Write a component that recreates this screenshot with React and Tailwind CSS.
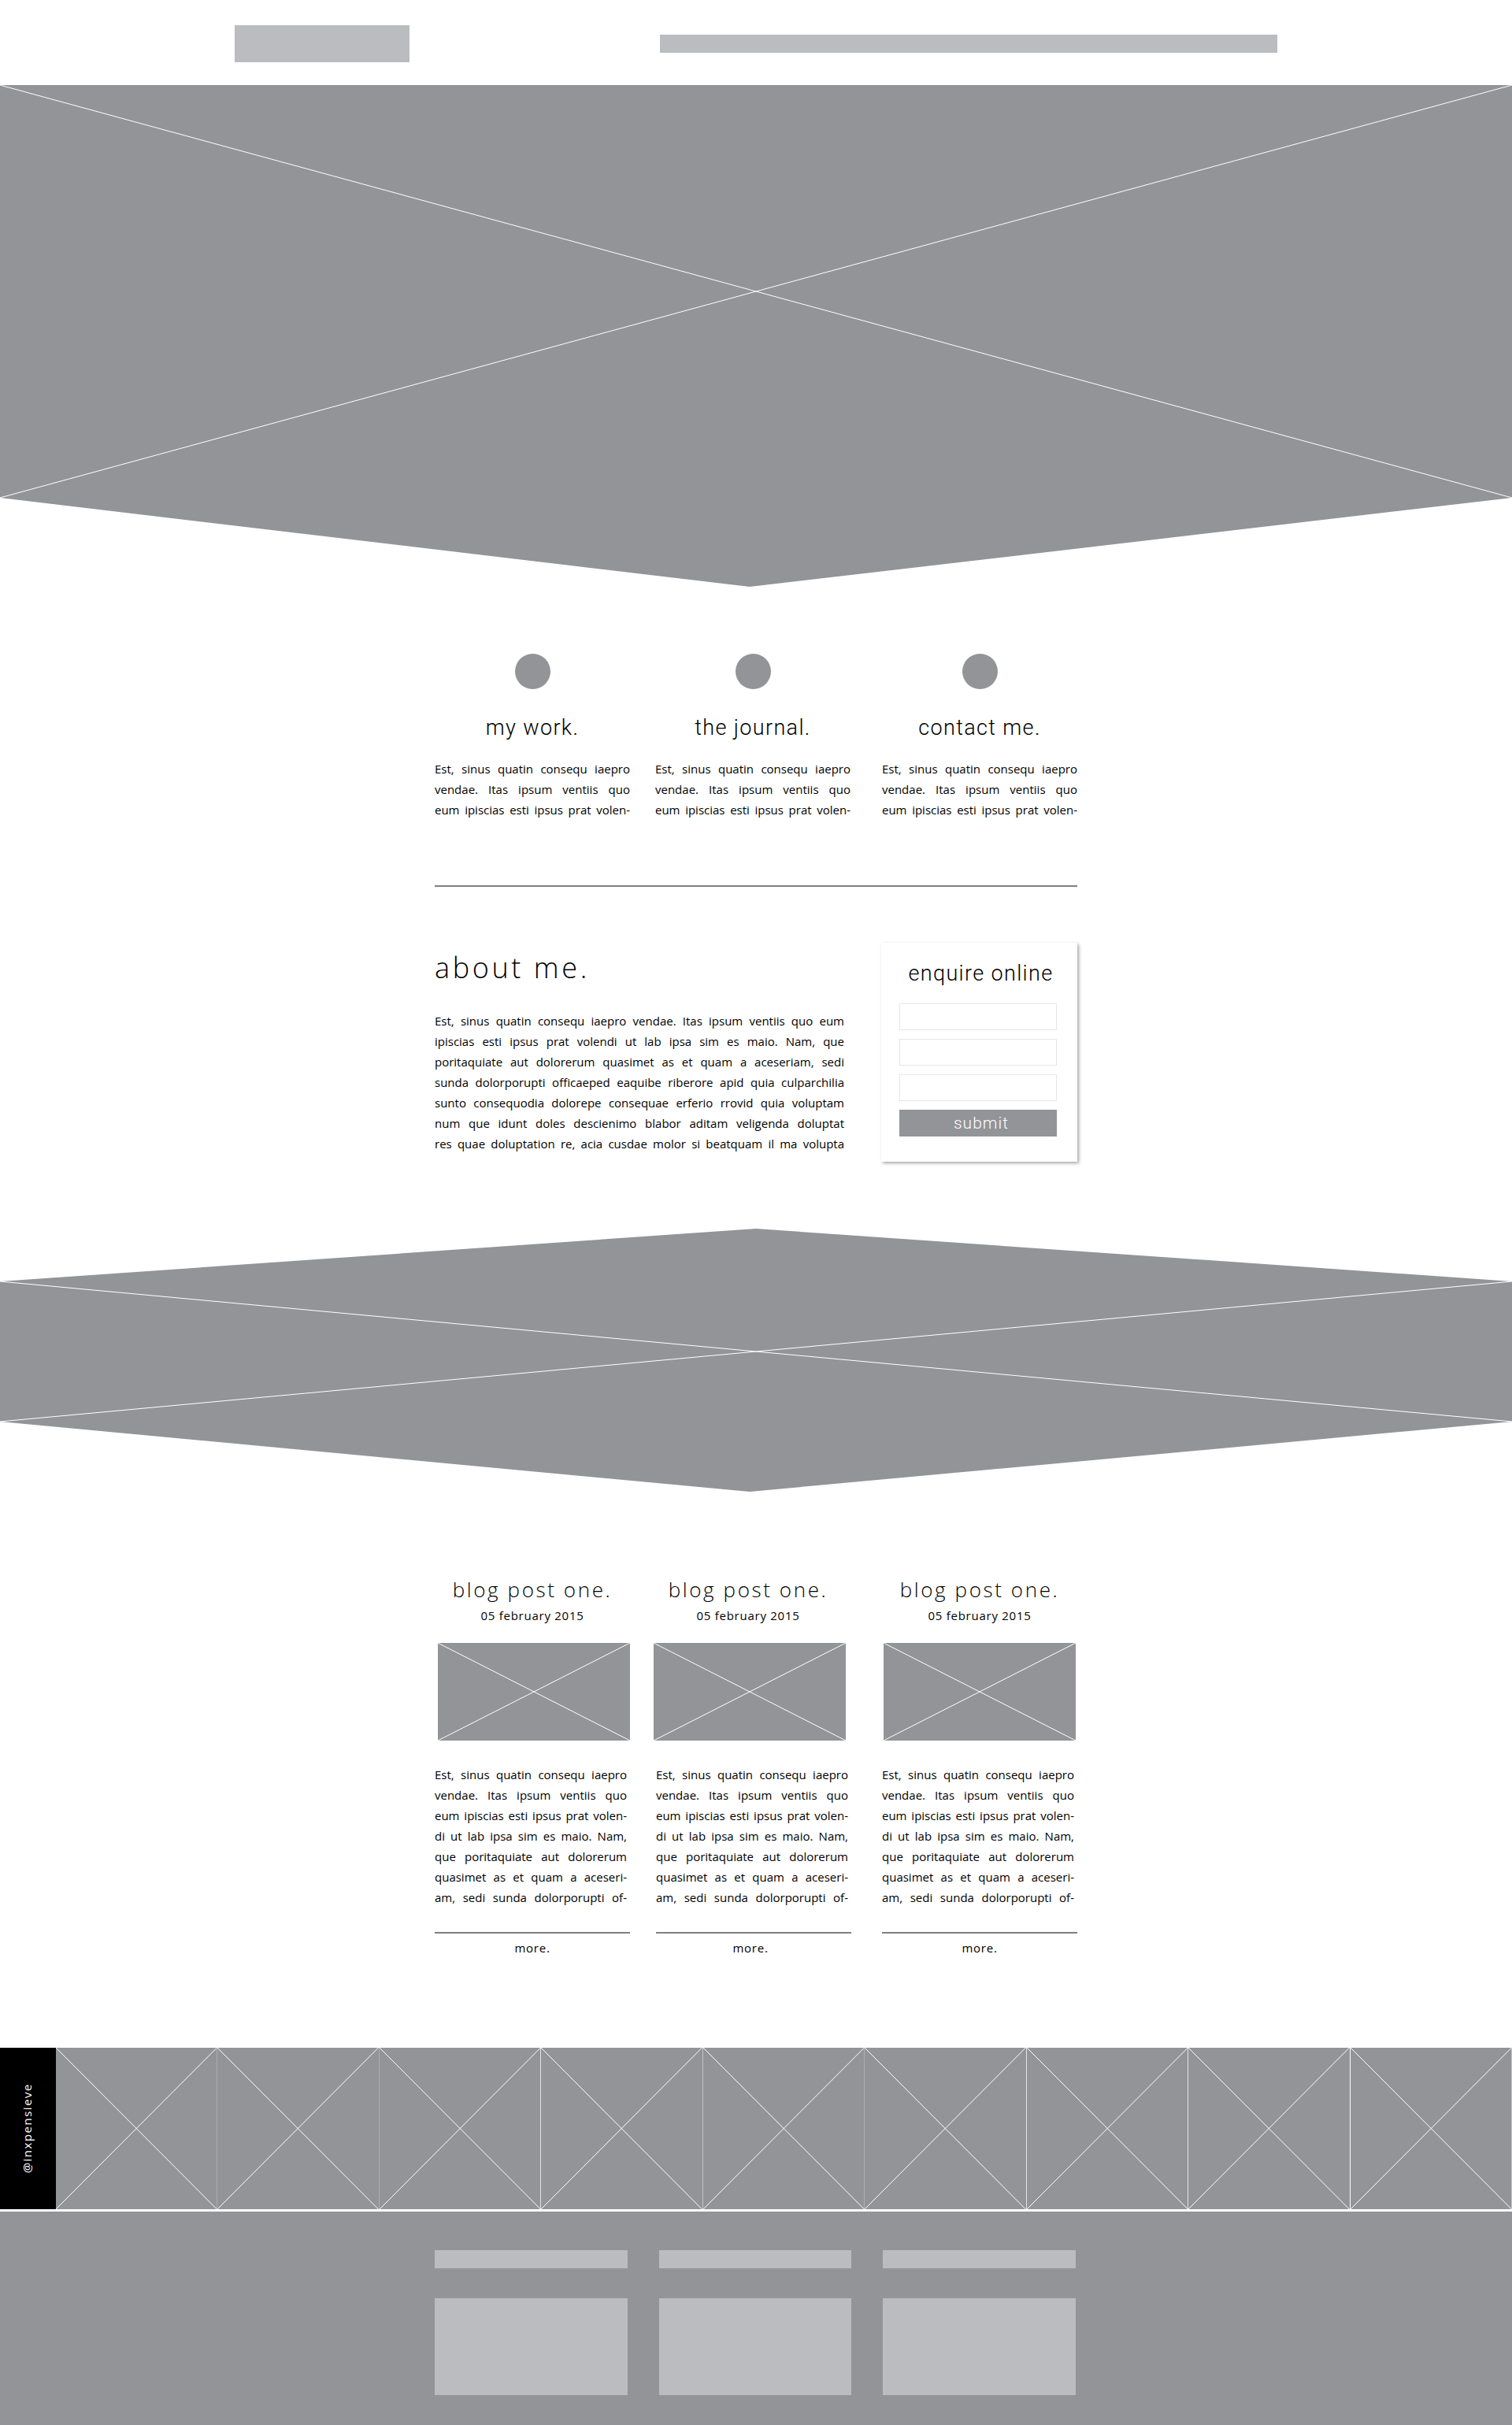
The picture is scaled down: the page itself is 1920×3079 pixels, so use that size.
import React from "react";

const FEATURE_LINES = [
  "Est, sinus quatin consequ iaepro",
  "vendae. Itas ipsum ventiis quo",
  "eum ipiscias esti ipsus prat volen-",
];

const ABOUT_LINES = [
  "Est, sinus quatin consequ iaepro vendae. Itas ipsum ventiis quo eum",
  "ipiscias esti ipsus prat volendi ut lab ipsa sim es maio. Nam, que",
  "poritaquiate aut dolorerum quasimet as et quam a aceseriam, sedi",
  "sunda dolorporupti officaeped eaquibe riberore apid quia culparchilia",
  "sunto consequodia dolorepe consequae erferio rrovid quia voluptam",
  "num que idunt doles descienimo blabor aditam veligenda doluptat",
  "res quae doluptation re, acia cusdae molor si beatquam il ma volupta",
];

const POST_LINES = [
  ...FEATURE_LINES,
  "di ut lab ipsa sim es maio. Nam,",
  "que poritaquiate aut dolorerum",
  "quasimet as et quam a aceseri-",
  "am, sedi sunda dolorporupti of-",
];

const FEATURES = [
  { title: "my work.", cell: "pr-8" },
  { title: "the journal.", cell: "pr-10" },
  { title: "contact me.", cell: "" },
];

const POSTS = [
  { id: 1, cell: "pr-[30px]", head: "", image: "ml-auto", text: "pr-1", more: "" },
  { id: 2, cell: "pr-[39px]", head: "max-w-[240px]", image: "", text: "pl-[3px] pr-1", more: "pl-[3px]" },
  { id: 3, cell: "", head: "", image: "mx-auto", text: "pr-1", more: "" },
];

const TILES = [
  "border-[#adadb0]",
  "border-[#adadb0]",
  "border-[#e3e3e4]",
  "border-[#c4c4c6]",
  "border-[#adadb0]",
  "border-[#e3e3e4]",
  "border-[#e3e3e4]",
  "border-white",
  "border-[#c4c4c6]",
];

function Cross({ className }) {
  return (
    <svg className={className} viewBox="0 0 100 100" preserveAspectRatio="none" aria-hidden="true">
      <path d="M0 0L100 100M100 0L0 100" fill="none" stroke="#ffffff" strokeWidth="1" vectorEffect="non-scaling-stroke" />
    </svg>
  );
}

function Justified({ lines, className = "" }) {
  return (
    <p className={`text-[15px] leading-[26px] ${className}`}>
      {lines.map((line) => (
        <span key={line} className="block text-justify whitespace-nowrap [text-align-last:justify]">
          {line}{" "}
        </span>
      ))}
    </p>
  );
}

function Field({ label, type }) {
  return (
    <input
      type={type}
      aria-label={label}
      className="h-[34px] w-full border border-[#e6e6e7] bg-white px-2 text-sm outline-none"
    />
  );
}

export default function App() {
  return (
    <div className="bg-white font-['Open_Sans',sans-serif] text-black">
      <header className="mx-auto flex h-[110px] max-w-[1324px] items-center justify-between">
        <div className="h-[47px] w-[222px] bg-[#bbbcc0]" />
        <div className="h-[23px] w-[784px] bg-[#bbbcc0]" />
      </header>

      <svg className="-mt-0.5 block h-[637px] w-full" viewBox="0 0 1920 637" preserveAspectRatio="none" aria-hidden="true">
        <path d="M0 0H1920V524L952 637L0 524Z" fill="#939498" />
        <path d="M0 0L1920 524M1920 0L0 524" fill="none" stroke="#ffffff" vectorEffect="non-scaling-stroke" />
      </svg>

      <main>
        <div className="mx-auto max-w-[816px]">
          <section className="grid grid-cols-[280fr_288fr_248fr] border-b-2 border-[#808080] pt-[85px] pb-[83px]">
            {FEATURES.map(({ title, cell }) => (
              <article key={title} className={cell}>
                <div className="mx-auto size-[45px] rounded-full bg-[#939498]" />
                <h2 className="mt-[31px] mb-[21px] text-center font-['Roboto',sans-serif] text-[27px] leading-9 font-light tracking-wider">
                  {title}
                </h2>
                <Justified lines={FEATURE_LINES} />
              </article>
            ))}
          </section>

          <section className="flex items-start justify-between pt-[71px] pb-[85px]">
            <div className="w-[520px] pt-2">
              <h1 className="mb-[30px] text-4xl leading-[48px] font-light tracking-widest">about me.</h1>
              <Justified lines={ABOUT_LINES} />
            </div>
            <form
              className="w-[249px] bg-white pt-[21px] pb-8 shadow-[2px_2px_4px_rgba(0,0,0,0.35)]"
              onSubmit={(event) => event.preventDefault()}
            >
              <h2 className="pl-1 text-center font-['Roboto',sans-serif] text-[27px] leading-9 font-light tracking-wider">
                enquire online
              </h2>
              <div className="mt-5 mr-[26px] ml-[23px] flex flex-col gap-[11px]">
                <Field label="Name" type="text" />
                <Field label="Email" type="email" />
                <Field label="Message" type="text" />
                <button
                  type="submit"
                  className="h-[34px] w-full bg-[#939498] pl-2 text-center font-['Roboto',sans-serif] text-[21px] leading-[34px] font-light tracking-wider text-white"
                >
                  submit
                </button>
              </div>
            </form>
          </section>
        </div>

        <svg className="block h-[334px] w-full" viewBox="0 0 1920 334" preserveAspectRatio="none" aria-hidden="true">
          <path d="M0 67L960 0L1920 67V245L952 334L0 245Z" fill="#939498" />
          <path d="M0 67L1920 245M1920 67L0 245" fill="none" stroke="#ffffff" vectorEffect="non-scaling-stroke" />
        </svg>

        <section className="mx-auto grid max-w-[816px] grid-cols-[278fr_290fr_248fr] pt-[108px] pb-[117px]">
          {POSTS.map(({ id, cell, head, image, text, more }) => (
            <article key={id} className={cell}>
              <div className={`text-center ${head}`}>
                <h2 className="text-[26px] leading-8 font-light tracking-widest whitespace-nowrap">blog post one.</h2>
                <p className="mt-[7px] text-[15px] leading-5 tracking-wider">05 february 2015</p>
              </div>
              <div className={`mt-[25px] h-[124px] max-w-[244px] bg-[#939498] ${image}`}>
                <Cross className="block size-full" />
              </div>
              <Justified lines={POST_LINES} className={`mt-[30px] ${text}`} />
              <div className={`mt-[31px] text-center ${more}`}>
                <div className="mb-2 border-b-2 border-[#808080]" />
                <div className={head}>
                  <a href="#more" className="block text-[15px] leading-5 tracking-wider">
                    more.
                  </a>
                </div>
              </div>
            </article>
          ))}
        </section>

        <section className="flex h-[205px]">
          <div className="flex w-[71px] shrink-0 items-center justify-center bg-black pr-1">
            <a href="#instagram" className="rotate-180 text-[15px] leading-6 tracking-widest text-white [writing-mode:vertical-rl]">
              @inxpensieve
            </a>
          </div>
          {TILES.map((border, index) => (
            <div key={index} className={`min-w-0 flex-1 border-r bg-[#939498] ${border}`}>
              <Cross className="block size-full" />
            </div>
          ))}
        </section>
      </main>

      <footer className="mt-[3px] bg-[#939498] pt-[49px] pb-[38px]">
        <div className="mx-auto grid max-w-[816px] grid-cols-3 gap-10 pr-0.5">
          {[1, 2, 3].map((column) => (
            <div key={column}>
              <div className="h-[23px] bg-[#bbbcc0]" />
              <div className="mt-[38px] h-[123px] bg-[#bbbcc0]" />
            </div>
          ))}
        </div>
      </footer>
    </div>
  );
}
